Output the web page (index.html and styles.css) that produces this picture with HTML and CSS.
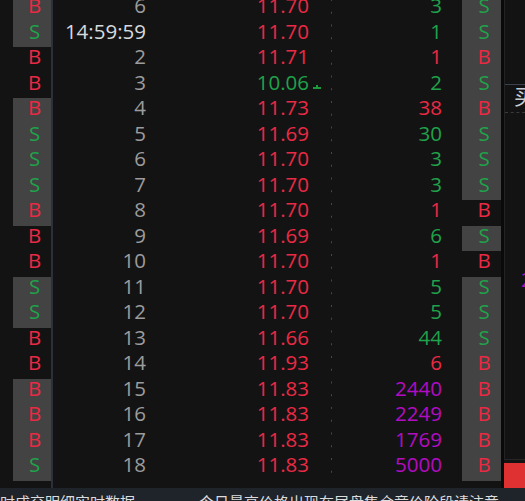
FILE: index.html
```html
<!DOCTYPE html>
<html lang="zh-CN">
<head>
    <meta charset="UTF-8">
    <title>分笔成交</title>
    <meta name="viewport" content="width=device-width, initial-scale=1.0">
    <link rel="stylesheet" href="styles.css">
</head>
<body>
    <div class="board">
        <div class="flags flags-left">
            <div class="flag buy shade">B</div>
            <div class="flag sell shade">S</div>
            <div class="flag buy">B</div>
            <div class="flag buy">B</div>
            <div class="flag buy shade">B</div>
            <div class="flag sell shade">S</div>
            <div class="flag sell shade">S</div>
            <div class="flag sell shade">S</div>
            <div class="flag buy shade">B</div>
            <div class="flag buy">B</div>
            <div class="flag buy">B</div>
            <div class="flag sell shade">S</div>
            <div class="flag sell shade">S</div>
            <div class="flag buy">B</div>
            <div class="flag buy">B</div>
            <div class="flag buy shade">B</div>
            <div class="flag buy shade">B</div>
            <div class="flag buy shade">B</div>
            <div class="flag sell shade">S</div>
        </div>
        <div class="ticks">
            <div class="tick"><span class="seq">6</span><span class="price up">11.70</span><span class="vol down">3</span></div>
            <div class="tick"><span class="seq time">14:59:59</span><span class="price up">11.70</span><span class="vol down">1</span></div>
            <div class="tick"><span class="seq">2</span><span class="price up">11.71</span><span class="vol up">1</span></div>
            <div class="tick"><span class="seq">3</span><span class="price down">10.06<svg class="mark" width="8" height="5" viewBox="0 0 8 5"><rect x="0" y="3" width="8" height="2" fill="#1b9b3c"/><rect x="3" y="1" width="2" height="2" fill="#1b9b3c"/></svg></span><span class="vol down">2</span></div>
            <div class="tick"><span class="seq">4</span><span class="price up">11.73</span><span class="vol up">38</span></div>
            <div class="tick"><span class="seq">5</span><span class="price up">11.69</span><span class="vol down">30</span></div>
            <div class="tick"><span class="seq">6</span><span class="price up">11.70</span><span class="vol down">3</span></div>
            <div class="tick"><span class="seq">7</span><span class="price up">11.70</span><span class="vol down">3</span></div>
            <div class="tick"><span class="seq">8</span><span class="price up">11.70</span><span class="vol up">1</span></div>
            <div class="tick"><span class="seq">9</span><span class="price up">11.69</span><span class="vol down">6</span></div>
            <div class="tick"><span class="seq">10</span><span class="price up">11.70</span><span class="vol up">1</span></div>
            <div class="tick"><span class="seq">11</span><span class="price up">11.70</span><span class="vol down">5</span></div>
            <div class="tick"><span class="seq">12</span><span class="price up">11.70</span><span class="vol down">5</span></div>
            <div class="tick"><span class="seq">13</span><span class="price up">11.66</span><span class="vol down">44</span></div>
            <div class="tick"><span class="seq">14</span><span class="price up">11.93</span><span class="vol up">6</span></div>
            <div class="tick"><span class="seq">15</span><span class="price up">11.83</span><span class="vol big">2440</span></div>
            <div class="tick"><span class="seq">16</span><span class="price up">11.83</span><span class="vol big">2249</span></div>
            <div class="tick"><span class="seq">17</span><span class="price up">11.83</span><span class="vol big">1769</span></div>
            <div class="tick"><span class="seq">18</span><span class="price up">11.83</span><span class="vol big">5000</span></div>
        </div>
        <div class="flags flags-right">
            <div class="flag sell shade">S</div>
            <div class="flag sell shade">S</div>
            <div class="flag buy shade">B</div>
            <div class="flag sell shade">S</div>
            <div class="flag buy shade">B</div>
            <div class="flag sell shade">S</div>
            <div class="flag sell shade">S</div>
            <div class="flag sell shade">S</div>
            <div class="flag buy">B</div>
            <div class="flag sell shade">S</div>
            <div class="flag buy">B</div>
            <div class="flag sell shade">S</div>
            <div class="flag sell shade">S</div>
            <div class="flag sell shade">S</div>
            <div class="flag buy shade">B</div>
            <div class="flag buy shade">B</div>
            <div class="flag buy shade">B</div>
            <div class="flag buy shade">B</div>
            <div class="flag buy shade">B</div>
        </div>
        <div class="side">
            <div class="side-panel">
                <div class="side-head">买入</div>
                <div class="side-num">2</div>
            </div>
            <div class="side-btn"></div>
        </div>
    </div>
    <div class="footer">
        <span>时成交明细实时数据</span><span class="footer-gap">今日最高价格出现在尾盘集合竞价阶段请注意</span>
    </div>
</body>
</html>
```

FILE: styles.css
```css
body {
    margin: 0;
    height: 501px;
    overflow: hidden;
    background: #141314;
    font-family: "Open Sans", "Noto Sans", sans-serif;
}
.board {
    display: flex;
    height: 491.5px;
    margin-top: -4px;
}
.flags {
    display: flex;
    flex-direction: column;
}
.flags-left {
    padding-left: 13px;
    border-right: 2px solid #2c3039;
}
.flags-right {
    border-right: 3px solid #0a0a0a;
}
.flag {
    box-sizing: border-box;
    width: 38px;
    height: 25.5px;
    padding-left: 5px;
    text-align: center;
    font-size: 20.5px;
    line-height: 19px;
}
.flags-right .flag {
    width: 39px;
}
.shade {
    background: #434343;
}
.buy {
    color: #ea2a44;
}
.sell {
    color: #1fa24a;
}
.ticks {
    align-self: flex-start;
    width: 409px;
    background: linear-gradient(#474747 2px, transparent 2px) 278px 3px / 1px 12.75px repeat-y;
}
.tick {
    display: flex;
    height: 25.5px;
    font-size: 20.5px;
    line-height: 19px;
}
.seq {
    width: 93px;
    text-align: right;
    color: #9c9c9c;
}
.time {
    color: #d6dade;
}
.price {
    position: relative;
    width: 163px;
    text-align: right;
}
.vol {
    width: 133px;
    text-align: right;
}
.up {
    color: #ea2a44;
}
.down {
    color: #1fa24a;
}
.big {
    color: #b20cc2;
}
.mark {
    position: absolute;
    left: calc(100% + 4px);
    top: 11px;
}
.side {
    flex: 1;
    display: flex;
    flex-direction: column;
    min-width: 0;
}
.side-panel {
    flex: 1;
    padding-top: 88px;
    border-left: 1px solid #232323;
    border-bottom: 1px solid #262626;
    margin-bottom: 3px;
    overflow: hidden;
}
.side-head {
    height: 27px;
    padding-left: 9px;
    border-top: 1px solid #3b414d;
    border-bottom: 1px dashed #3a3a3a;
    font: 21px/20px "Noto Sans CJK SC", sans-serif;
    color: #c9cdd3;
    white-space: nowrap;
}
.side-num {
    margin-top: 157px;
    padding-left: 16px;
    font-size: 20.5px;
    line-height: 19px;
    color: #b20cc2;
}
.side-btn {
    height: 25px;
    background: #df3131;
}
.footer {
    box-sizing: border-box;
    height: 30px;
    padding-top: 4px;
    background: #1f232a;
    font: 15px/20px "Noto Sans CJK SC", sans-serif;
    color: #dcdcdc;
    white-space: nowrap;
    overflow: hidden;
}
.footer-gap {
    margin-left: 64px;
}
```
